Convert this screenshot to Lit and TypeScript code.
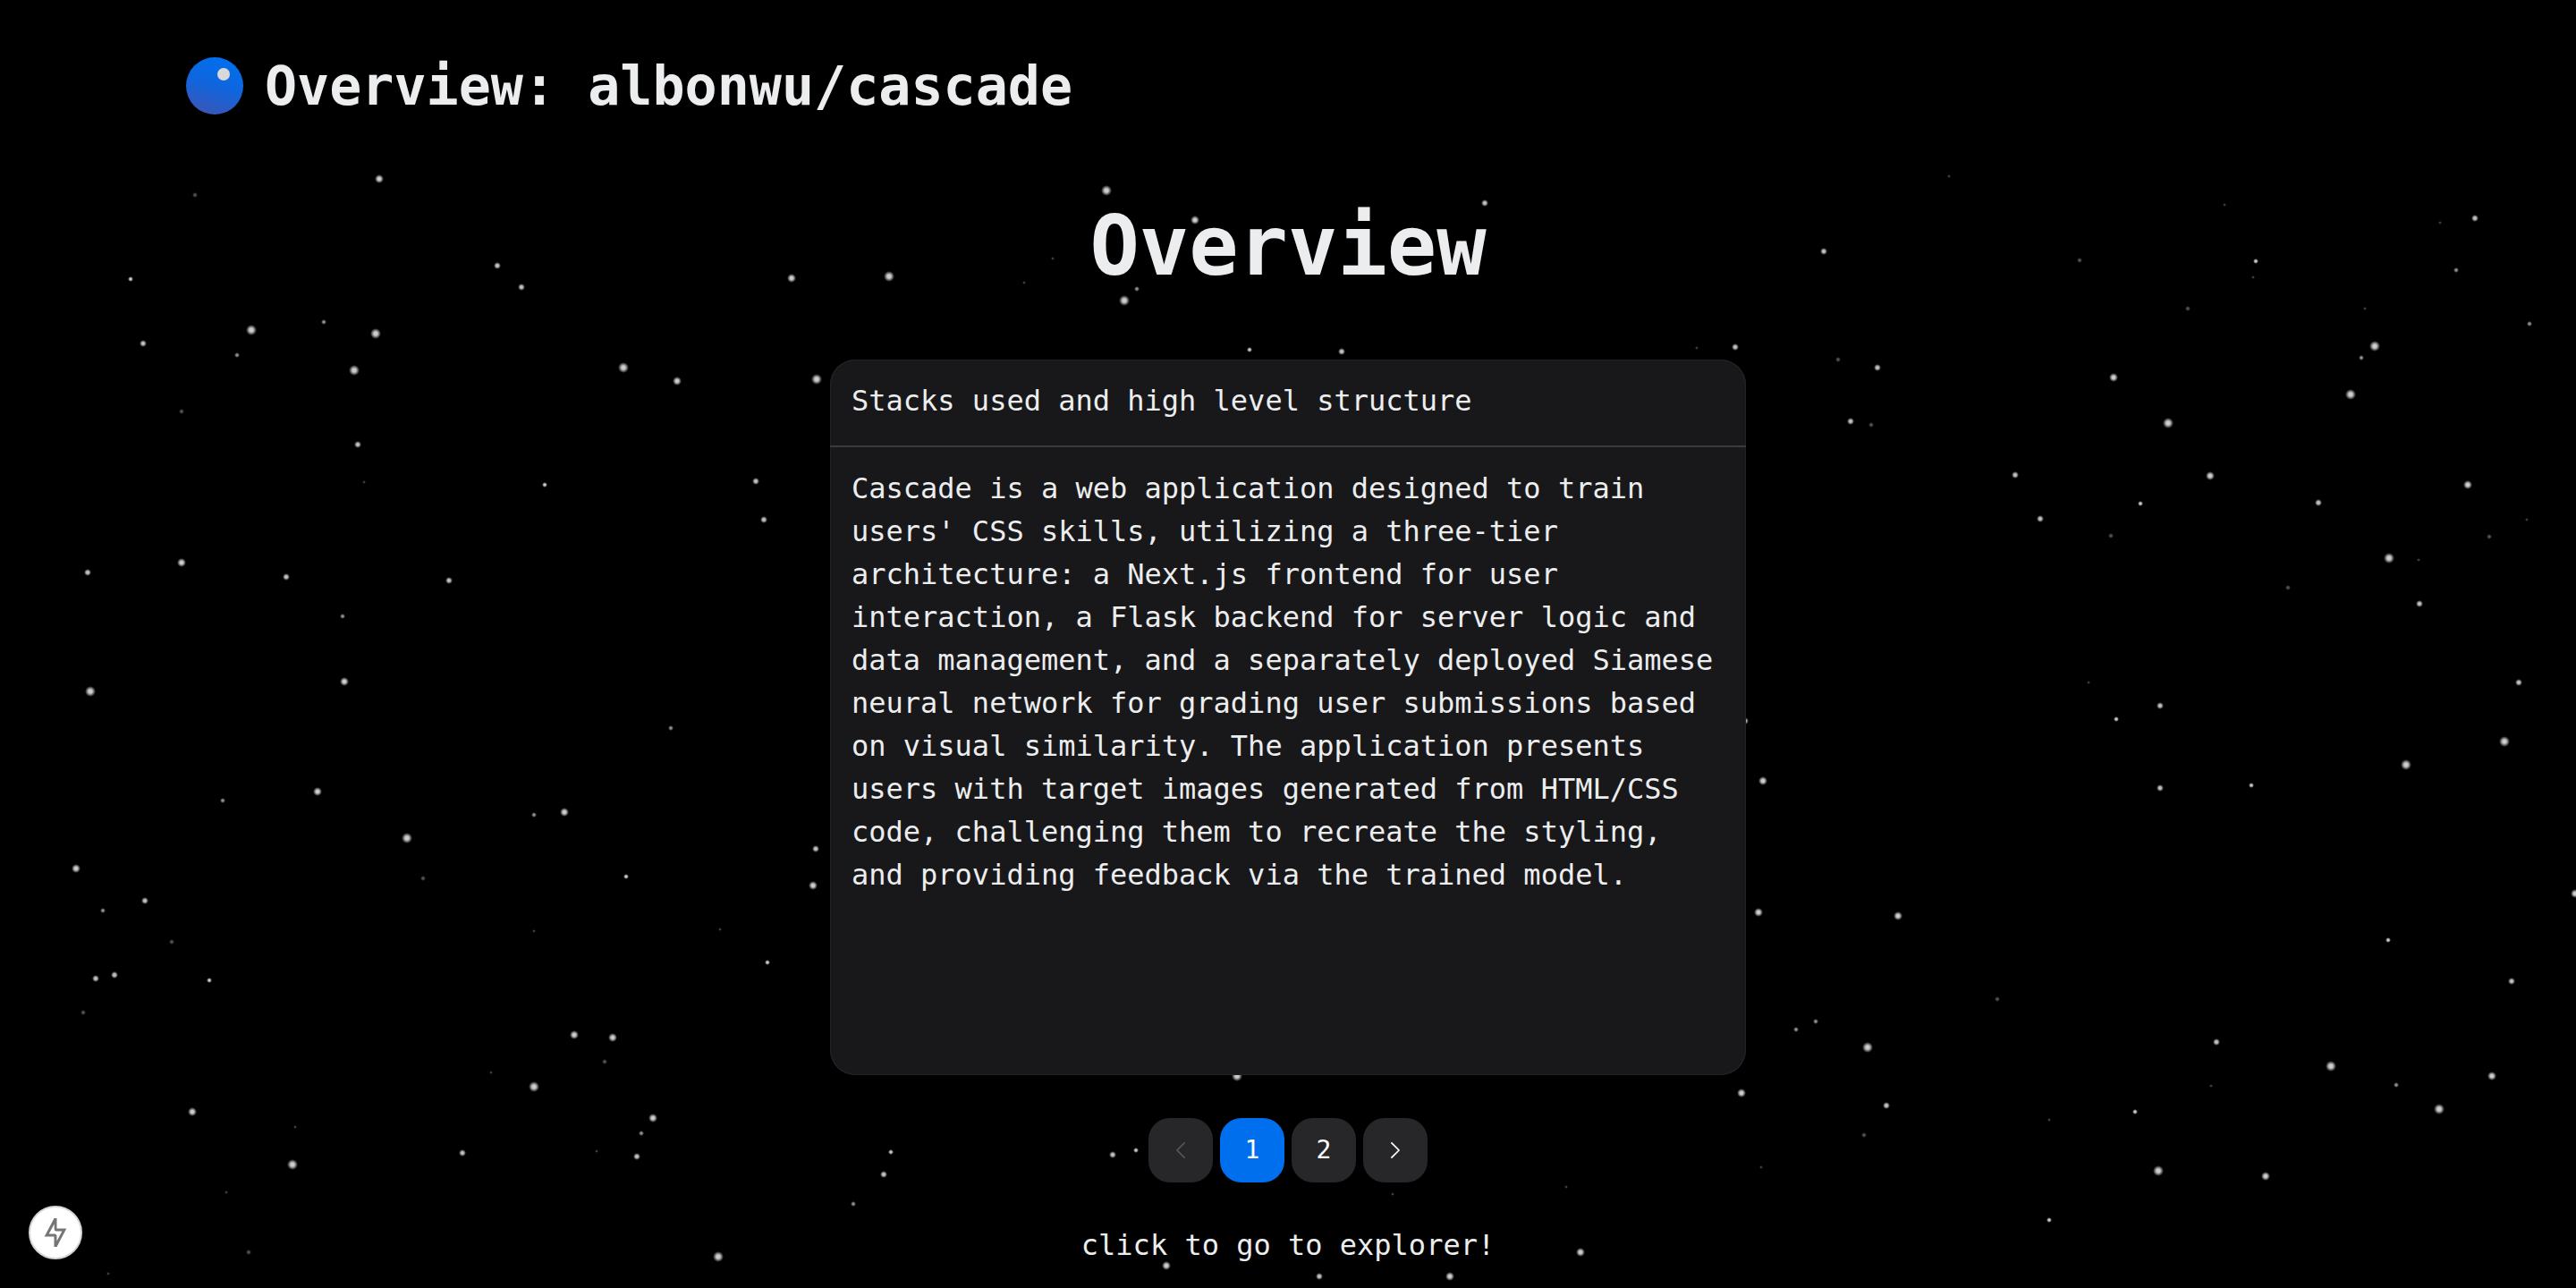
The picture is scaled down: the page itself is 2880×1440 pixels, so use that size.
import { LitElement, html, svg, css } from "lit";
import { customElement, state } from "lit/decorators.js";

type Star = [number, number, number];

// Radius and opacity for each brightness level, faintest first.
const LEVELS = [
  { r: 2, o: 0.3 },
  { r: 3, o: 0.4 },
  { r: 3, o: 0.7 },
  { r: 3, o: 1 },
  { r: 4, o: 0.95 },
  { r: 5, o: 1 },
  { r: 6, o: 1 },
];

// x, y, brightness level
const STARS: Star[] = [
  [424, 200, 5], [218, 218, 1], [146, 312, 3], [556, 297, 4], [583, 321, 4], [885, 311, 5],
  [281, 369, 6], [362, 360, 2], [420, 373, 6], [160, 384, 4], [265, 397, 2], [396, 414, 6],
  [697, 411, 6], [757, 426, 5], [913, 424, 6], [203, 460, 1], [400, 497, 4], [407, 539, 0],
  [609, 542, 3], [845, 538, 4], [854, 581, 4], [203, 629, 5], [98, 640, 4], [320, 645, 4],
  [502, 649, 4], [383, 689, 2], [385, 762, 5], [101, 773, 6],
  [750, 814, 2], [355, 885, 5], [249, 895, 2], [597, 911, 2], [631, 908, 5], [455, 937, 6],
  [912, 949, 4], [85, 971, 5], [473, 982, 1], [700, 980, 3], [909, 990, 5], [162, 1007, 4],
  [115, 1018, 2], [597, 1041, 0], [805, 1039, 0], [192, 1053, 1], [858, 1076, 3],
  [107, 1094, 4], [128, 1090, 4], [234, 1096, 3], [93, 1132, 1], [642, 1157, 5],
  [685, 1160, 5], [676, 1187, 1], [549, 1199, 0], [597, 1215, 6], [215, 1243, 5],
  [330, 1260, 0], [730, 1250, 5], [717, 1267, 2], [517, 1289, 4], [667, 1287, 0],
  [712, 1293, 4], [327, 1302, 6], [253, 1333, 0], [278, 1400, 1], [803, 1405, 6],
  [121, 1424, 0],
  [2179, 197, 0], [2487, 229, 0], [2767, 244, 4], [2728, 249, 0], [2039, 281, 4],
  [2325, 291, 1], [2522, 292, 3], [2519, 310, 0], [2746, 302, 2], [2446, 345, 1],
  [2644, 345, 0], [2828, 362, 2], [2655, 387, 6], [2640, 400, 2], [1940, 388, 4],
  [2055, 402, 1], [2099, 411, 4], [2363, 422, 5], [2628, 441, 6], [2069, 471, 4],
  [2092, 475, 1], [2424, 473, 6], [2253, 531, 4], [2471, 532, 5], [2759, 542, 5],
  [2393, 563, 3], [2592, 562, 4], [2281, 580, 4], [2360, 599, 1], [2825, 581, 0],
  [2783, 600, 1], [2671, 624, 6], [2704, 626, 0], [2558, 657, 1], [2705, 675, 4],
  [2335, 763, 0], [2816, 763, 4], [2415, 789, 4],
  [1951, 806, 4], [2366, 804, 3], [2800, 829, 6], [2690, 855, 6], [1971, 873, 5],
  [2415, 881, 4], [2517, 878, 3], [2879, 999, 5], [1966, 1020, 5], [2122, 1024, 5],
  [2670, 1051, 3], [2808, 1097, 4], [2233, 1117, 1], [2030, 1142, 2], [2008, 1151, 2],
  [2088, 1171, 6], [2478, 1165, 4], [2606, 1192, 6], [2786, 1203, 5], [2472, 1214, 0],
  [2679, 1213, 2], [1947, 1222, 5], [2109, 1236, 4], [2387, 1243, 3], [2727, 1240, 6],
  [2291, 1252, 0], [2084, 1269, 1], [1969, 1305, 0], [2413, 1309, 6], [2533, 1315, 5],
  [2291, 1364, 3],
  [1383, 1203, 6], [996, 1288, 3], [988, 1313, 4], [954, 1346, 2], [1244, 1291, 4],
  [1270, 1286, 3], [1557, 1335, 0], [1751, 1327, 0], [1304, 1415, 5], [1475, 1427, 4],
  [1621, 1427, 5], [1767, 1400, 5],
  [1237, 213, 6], [1336, 246, 5], [1660, 227, 4], [1177, 289, 0], [1145, 316, 0],
  [1271, 323, 2], [1257, 336, 6], [994, 309, 6], [1397, 391, 3], [1500, 393, 4],
  [1897, 389, 0],
];

@customElement("star-field")
export class StarField extends LitElement {
  static styles = css`
    :host {
      display: block;
    }
    .sky {
      display: block;
      width: 100%;
      height: 100%;
    }
  `;

  render() {
    return html`
      <svg class="sky" viewBox="0 0 2880 1440" preserveAspectRatio="xMidYMid slice" aria-hidden="true">
        <defs>
          <radialGradient id="glow">
            <stop offset="0" stop-color="#d0d0d0"></stop>
            <stop offset="0.35" stop-color="#c8c8c8"></stop>
            <stop offset="1" stop-color="#c8c8c8" stop-opacity="0"></stop>
          </radialGradient>
        </defs>
        ${STARS.map(
          ([x, y, level]) =>
            svg`<circle cx=${x} cy=${y} r=${LEVELS[level].r} opacity=${LEVELS[level].o} fill="url(#glow)"></circle>`
        )}
      </svg>
    `;
  }
}

@customElement("app-root")
export class AppRoot extends LitElement {
  @state() private page = 1;

  static styles = css`
    :host {
      display: block;
      position: relative;
      min-height: 100vh;
      overflow: hidden;
      background: #000;
      color: #ecedee;
      font-family: "DejaVu Sans Mono", "Liberation Mono", monospace;
      font-size: 32px;
      line-height: 48px;
    }
    *,
    *::before {
      box-sizing: border-box;
    }
    button {
      font: inherit;
      color: inherit;
      border: 0;
      padding: 0;
      cursor: pointer;
    }
    .backdrop {
      position: absolute;
      inset: 0;
    }
    .page {
      position: relative;
      display: flex;
      flex-direction: column;
    }
    .topbar {
      display: flex;
      align-items: center;
      gap: 24px;
      padding: 64px 208px;
    }
    .logo {
      width: 64px;
      height: 64px;
      flex: none;
    }
    .repo {
      margin: 0;
      font-size: 60px;
      line-height: 64px;
      font-weight: 700;
    }
    .content {
      display: flex;
      flex-direction: column;
      align-items: center;
      gap: 46px;
      padding: 36px 24px 24px;
    }
    .title {
      margin: 0 0 32px;
      font-size: 92px;
      line-height: 96px;
      font-weight: 700;
    }
    .card {
      width: 100%;
      max-width: 1024px;
      min-height: 800px;
      margin-bottom: 2px;
      border-radius: 28px;
      background: #18181a;
      box-shadow: inset 0 0 2px rgba(255, 255, 255, 0.2);
    }
    .card-head {
      padding: 22px 24px 26px;
      border-bottom: 2px solid #3a3a3c;
    }
    .card-title {
      margin: 0;
      font-size: 32px;
      font-weight: 400;
    }
    .card-body {
      margin: 0;
      padding: 22px 24px 26px;
    }
    .pager {
      display: flex;
      gap: 8px;
    }
    .pager-item {
      display: flex;
      align-items: center;
      justify-content: center;
      width: 72px;
      height: 72px;
      border-radius: 24px;
      background: #27272a;
      color: #fff;
      font-size: 28px;
    }
    .pager-item.active {
      background: #006fee;
    }
    .pager-item:disabled {
      color: #555558;
      cursor: default;
    }
    .chevron {
      width: 28px;
      height: 28px;
    }
    .explore {
      color: inherit;
      text-decoration: none;
    }
    .indicator {
      position: absolute;
      left: 32px;
      bottom: 32px;
      display: flex;
      align-items: center;
      justify-content: center;
      width: 60px;
      height: 60px;
      border: 2px solid #d6d6d6;
      border-radius: 50%;
      background: #fff;
      color: #757575;
    }
    .bolt {
      width: 34px;
      height: 34px;
    }
  `;

  render() {
    return html`
      <star-field class="backdrop"></star-field>
      <div class="page">
        <header class="topbar">
          <svg class="logo" viewBox="0 0 64 64" aria-hidden="true">
            <defs>
              <linearGradient id="orb" x1="0.65" y1="0" x2="0.35" y2="1">
                <stop offset="0" stop-color="#006fee"></stop>
                <stop offset="0.5" stop-color="#1065dc"></stop>
                <stop offset="1" stop-color="#3a56b8"></stop>
              </linearGradient>
            </defs>
            <circle cx="32" cy="32" r="32" fill="url(#orb)"></circle>
            <circle cx="42" cy="19" r="7" fill="#d9d9d9"></circle>
          </svg>
          <h2 class="repo">Overview: albonwu/cascade</h2>
        </header>
        <main class="content">
          <h1 class="title">Overview</h1>
          <article class="card">
            <header class="card-head">
              <h2 class="card-title">Stacks used and high level structure</h2>
            </header>
            <p class="card-body">
              Cascade is a web application designed to train users' CSS skills, utilizing a
              three-tier architecture: a Next.js frontend for user interaction, a Flask backend for
              server logic and data management, and a separately deployed Siamese neural network
              for grading user submissions based on visual similarity. The application presents
              users with target images generated from HTML/CSS code, challenging them to recreate
              the styling, and providing feedback via the trained model.
            </p>
          </article>
          <nav class="pager" aria-label="Pages">
            <button
              class="pager-item"
              aria-label="Previous page"
              ?disabled=${this.page === 1}
              @click=${() => (this.page = 1)}
            >
              <svg class="chevron" viewBox="0 0 24 24" fill="none" stroke="currentColor" stroke-width="1.5" stroke-linecap="round" stroke-linejoin="round" aria-hidden="true">
                <path d="M15.5 19l-7-7 7-7"></path>
              </svg>
            </button>
            ${[1, 2].map(
              (n) => html`<button
                class="pager-item ${n === this.page ? "active" : ""}"
                @click=${() => (this.page = n)}
              >${n}</button>`
            )}
            <button
              class="pager-item"
              aria-label="Next page"
              ?disabled=${this.page === 2}
              @click=${() => (this.page = 2)}
            >
              <svg class="chevron" viewBox="0 0 24 24" fill="none" stroke="currentColor" stroke-width="1.5" stroke-linecap="round" stroke-linejoin="round" aria-hidden="true">
                <path d="M8.5 5l7 7-7 7"></path>
              </svg>
            </button>
          </nav>
          <a class="explore" href="#explorer">click to go to explorer!</a>
        </main>
      </div>
      <button class="indicator" aria-label="Static route">
        <svg class="bolt" viewBox="0 0 34 34" aria-hidden="true">
          <path
            fill="currentColor"
            fill-rule="evenodd"
            d="M15.5 1H18.5V12.5H29.3L18.5 33H15.5V21.5H4.7ZM15.7 7.6L9.6 18.5H16Q18.5 18.5 18.5 21V26.4L24.4 15.5H18Q15.7 15.5 15.7 13Z"
          ></path>
        </svg>
      </button>
    `;
  }
}
